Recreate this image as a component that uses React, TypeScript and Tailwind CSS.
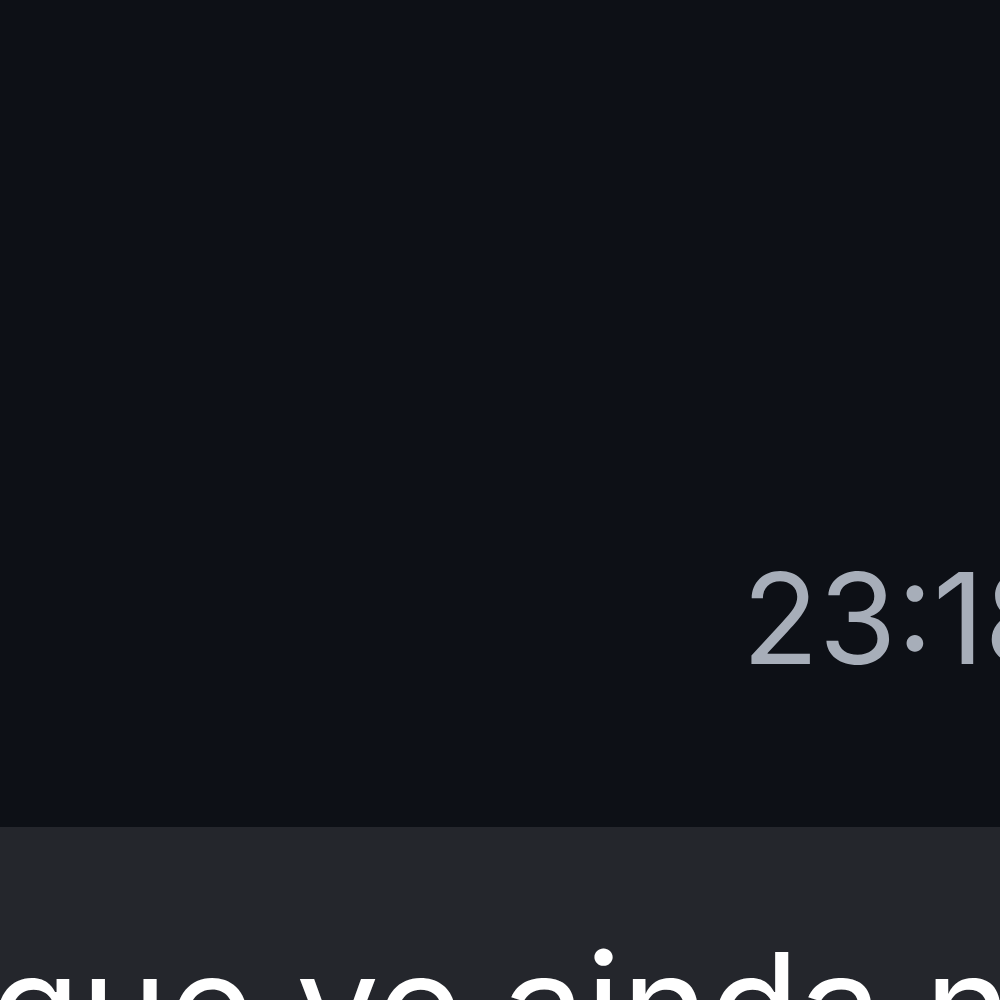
export default function App() {
  return (
    <div className="w-[1000px] h-[1000px] overflow-hidden flex flex-col font-['Inter','Noto_Sans',sans-serif]">
      {/* mensagem recebida */}
      <div className="h-[827px] shrink-0 bg-[#0d1016] pl-[742px] pt-[555px] whitespace-nowrap">
        <span className="text-[126px] leading-none text-[#a7aeb9]">23:18</span>
      </div>

      {/* campo de texto */}
      <div className="flex-1 bg-[#24262c] pt-[106px] whitespace-nowrap">
        <p className="ml-[-10px] text-[148px] leading-none text-white">que vc ainda não</p>
      </div>
    </div>
  );
}
